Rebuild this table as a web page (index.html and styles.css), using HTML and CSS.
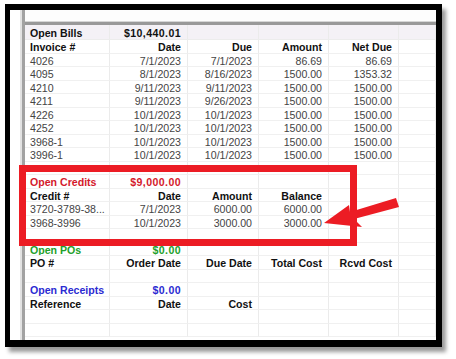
FILE: index.html
```html
<!DOCTYPE html>
<html>
<head>
<meta charset="utf-8">
<link rel="stylesheet" href="styles.css">
</head>
<body>
<div class="frame">
  <div class="pane">
    <div class="topstrip"></div>
    <div class="hline"></div>
    <div class="sheet">
      <div class="r hdr"><div class="c b">Open Bills</div><div class="c n b wide">$10,440.01</div><div class="c"></div><div class="c"></div><div class="c"></div><div class="c"></div></div>
      <div class="r"><div class="c b">Invoice #</div><div class="c n b">Date</div><div class="c n b">Due</div><div class="c n b">Amount</div><div class="c n b">Net Due</div><div class="c"></div></div>
      <div class="r"><div class="c">4026</div><div class="c n">7/1/2023</div><div class="c n">7/1/2023</div><div class="c n">86.69</div><div class="c n">86.69</div><div class="c"></div></div>
      <div class="r"><div class="c">4095</div><div class="c n">8/1/2023</div><div class="c n">8/16/2023</div><div class="c n">1500.00</div><div class="c n">1353.32</div><div class="c"></div></div>
      <div class="r"><div class="c">4210</div><div class="c n">9/11/2023</div><div class="c n">9/11/2023</div><div class="c n">1500.00</div><div class="c n">1500.00</div><div class="c"></div></div>
      <div class="r"><div class="c">4211</div><div class="c n">9/11/2023</div><div class="c n">9/26/2023</div><div class="c n">1500.00</div><div class="c n">1500.00</div><div class="c"></div></div>
      <div class="r"><div class="c">4226</div><div class="c n">10/1/2023</div><div class="c n">10/1/2023</div><div class="c n">1500.00</div><div class="c n">1500.00</div><div class="c"></div></div>
      <div class="r"><div class="c">4252</div><div class="c n">10/1/2023</div><div class="c n">10/1/2023</div><div class="c n">1500.00</div><div class="c n">1500.00</div><div class="c"></div></div>
      <div class="r"><div class="c">3968-1</div><div class="c n">10/1/2023</div><div class="c n">10/1/2023</div><div class="c n">1500.00</div><div class="c n">1500.00</div><div class="c"></div></div>
      <div class="r"><div class="c">3996-1</div><div class="c n">10/1/2023</div><div class="c n">10/1/2023</div><div class="c n">1500.00</div><div class="c n">1500.00</div><div class="c"></div></div>
      <div class="r"><div class="c"></div><div class="c"></div><div class="c"></div><div class="c"></div><div class="c"></div><div class="c"></div></div>
      <div class="r"><div class="c b red">Open Credits</div><div class="c n b red wide">$9,000.00</div><div class="c"></div><div class="c"></div><div class="c"></div><div class="c"></div></div>
      <div class="r"><div class="c b">Credit #</div><div class="c n b">Date</div><div class="c n b">Amount</div><div class="c n b">Balance</div><div class="c"></div><div class="c"></div></div>
      <div class="r"><div class="c">3720-3789-38...</div><div class="c n">7/1/2023</div><div class="c n">6000.00</div><div class="c n">6000.00</div><div class="c"></div><div class="c"></div></div>
      <div class="r"><div class="c">3968-3996</div><div class="c n">10/1/2023</div><div class="c n">3000.00</div><div class="c n">3000.00</div><div class="c"></div><div class="c"></div></div>
      <div class="r"><div class="c"></div><div class="c"></div><div class="c"></div><div class="c"></div><div class="c"></div><div class="c"></div></div>
      <div class="r"><div class="c b green">Open POs</div><div class="c n b green wide">$0.00</div><div class="c"></div><div class="c"></div><div class="c"></div><div class="c"></div></div>
      <div class="r"><div class="c b">PO #</div><div class="c n b">Order Date</div><div class="c n b">Due Date</div><div class="c n b">Total Cost</div><div class="c n b">Rcvd Cost</div><div class="c"></div></div>
      <div class="r"><div class="c"></div><div class="c"></div><div class="c"></div><div class="c"></div><div class="c"></div><div class="c"></div></div>
      <div class="r"><div class="c b blue">Open Receipts</div><div class="c n b blue wide">$0.00</div><div class="c"></div><div class="c"></div><div class="c"></div><div class="c"></div></div>
      <div class="r"><div class="c b">Reference</div><div class="c n b">Date</div><div class="c n b">Cost</div><div class="c"></div><div class="c"></div><div class="c"></div></div>
      <div class="r"><div class="c"></div><div class="c"></div><div class="c"></div><div class="c"></div><div class="c"></div><div class="c"></div></div>
      <div class="r"><div class="c"></div><div class="c"></div><div class="c"></div><div class="c"></div><div class="c"></div><div class="c"></div></div>
    </div>
  </div>
</div>
<svg class="overlay" width="456" height="359" viewBox="0 0 456 359">
  <rect x="22.5" y="168.5" width="331" height="74" fill="none" stroke="#ec1c24" stroke-width="7"/>
  <polygon fill="#ec1c24" points="324,223 349,205 350,212 396,198 399,207 354,219 362,227"/>
</svg>
</body>
</html>
```

FILE: styles.css
```css
html, body {
  margin: 0;
  padding: 0;
  background: #ffffff;
}

body {
  width: 456px;
  height: 359px;
  overflow: hidden;
  position: relative;
  font-family: "Liberation Sans", Arial, sans-serif;
}

.frame {
  margin: 4px 0 0 5px;
  width: 437px;
  height: 343px;
  box-sizing: border-box;
  border-style: solid;
  border-color: #000;
  border-width: 6px 6px 7px 5px;
  background: #fff;
  box-shadow: 4px 5px 4px rgba(0, 0, 0, 0.4);
  overflow: hidden;
}

.pane {
  margin-left: 12px;
  height: 100%;
  border-left: 3px solid #a2a2a2;
  box-shadow: -2px 0 0 #e2e2e2;
  display: flex;
  flex-direction: column;
  overflow: hidden;
}

.topstrip {
  height: 11px;
  flex: none;
  background: #fdfdfd;
  border-bottom: 1px solid #d6d6d6;
}

.hline {
  height: 3px;
  flex: none;
  background: #999999;
}

.sheet {
  flex: 1;
  overflow: hidden;
}

.r {
  display: grid;
  grid-template-columns: 85px 78px 71px 70px 70px 1fr;
  height: 13.5px;
}

.r.hdr {
  height: 15px;
  background: #f4f1f6;
}

.c {
  box-sizing: border-box;
  border-right: 1px solid #ebebeb;
  border-bottom: 1px solid #f0f0f0;
  padding: 0 6px 0 5px;
  font-size: 10.6px;
  line-height: 15px;
  color: #444444;
  white-space: nowrap;
  overflow: hidden;
}

.hdr .c {
  line-height: 16px;
  border-bottom-color: #ececec;
}

.n {
  text-align: right;
}

.b {
  font-weight: bold;
  color: #111111;
}

.wide {
  letter-spacing: 0.4px;
}

.b.red {
  color: #d4192b;
}

.b.green {
  color: #22a02a;
}

.b.blue {
  color: #2b2bd2;
}

.overlay {
  position: absolute;
  left: 0;
  top: 0;
  pointer-events: none;
}
```
